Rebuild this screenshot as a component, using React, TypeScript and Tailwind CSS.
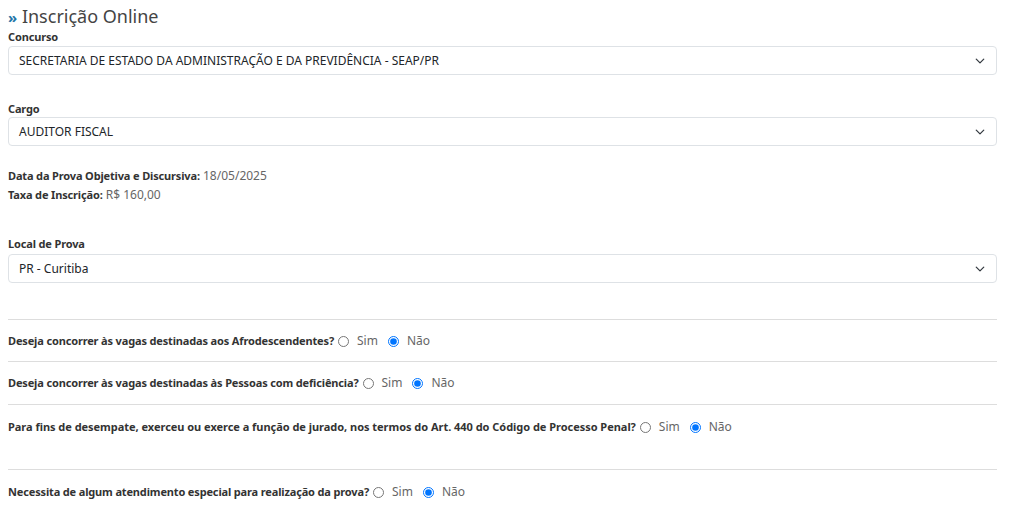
import React from "react";

const font = { fontFamily: '"Noto Sans", "Open Sans", Arial, sans-serif' };

function Chevron() {
  return (
    <svg width="10" height="10" viewBox="0 0 16 16" className="shrink-0">
      <path d="M2 5l6 6 6-6" fill="none" stroke="#343a40" strokeWidth="2" strokeLinecap="round" strokeLinejoin="round" />
    </svg>
  );
}

function Select({ value }: { value: string }) {
  return (
    <div className="flex h-[29px] items-center justify-between rounded border border-[#dee2e6] bg-white pl-[10px] pr-[11px] text-[12px] text-[#212529]">
      <span>{value}</span>
      <Chevron />
    </div>
  );
}

function Radio({ checked }: { checked?: boolean }) {
  return <input type="radio" readOnly checked={!!checked} className="m-0 h-[11px] w-[11px]" />;
}

function Question({ text, wide }: { text: string; wide?: boolean }) {
  return (
    <div className="flex items-center text-[12px] leading-[18px]">
      <span className={wide ? "text-[11px] font-bold tracking-[-0.03px] text-[#333]" : "text-[11px] font-bold tracking-[-0.15px] text-[#333]"}>{text}</span>
      <span className="ml-[4px] flex items-center text-[#666]">
        <Radio />
        <span className="ml-[8px]">Sim</span>
        <span className="ml-[10px] flex"><Radio checked /></span>
        <span className="ml-[8px]">Não</span>
      </span>
    </div>
  );
}

export default function App() {
  return (
    <div className="min-h-[519px] bg-white pl-[8px] pr-[27px] text-[#333]" style={font}>
      <h1 className="pt-[3px] text-[18px] leading-[26px] text-[#444]">
        <span className="text-[#1f76a8] text-[15px] font-bold">»</span> Inscrição Online
      </h1>

      <label className="block text-[11px] font-bold leading-[14px] tracking-[-0.15px]">Concurso</label>
      <div className="mt-[2px]">
        <Select value="SECRETARIA DE ESTADO DA ADMINISTRAÇÃO E DA PREVIDÊNCIA - SEAP/PR" />
      </div>

      <label className="mt-[27px] block text-[11px] font-bold leading-[14px] tracking-[-0.15px]">Cargo</label>
      <div className="mt-[1px]">
        <Select value="AUDITOR FISCAL" />
      </div>

      <div className="mt-[22px] space-y-[3px] text-[12px] leading-[16px]">
        <p><b className="text-[11px] tracking-[-0.15px]">Data da Prova Objetiva e Discursiva:</b> <span className="text-[#666]">18/05/2025</span></p>
        <p><b className="text-[11px] tracking-[-0.15px]">Taxa de Inscrição:</b> <span className="text-[#666]">R$ 160,00</span></p>
      </div>

      <label className="mt-[34px] block text-[11px] font-bold leading-[14px] tracking-[-0.15px]">Local de Prova</label>
      <div className="mt-[3px]">
        <Select value="PR - Curitiba" />
      </div>

      <hr className="mt-[36px] border-[#ddd]" />
      <div className="pt-[12px] pb-[11px]"><Question text="Deseja concorrer às vagas destinadas aos Afrodescendentes?" /></div>
      <hr className="border-[#ddd]" />
      <div className="pt-[12px] pb-[12px]"><Question text="Deseja concorrer às vagas destinadas às Pessoas com deficiência?" /></div>
      <hr className="border-[#ddd]" />
      <div className="pt-[13px] pb-[33px]"><Question wide text="Para fins de desempate, exerceu ou exerce a função de jurado, nos termos do Art. 440 do Código de Processo Penal?" /></div>
      <hr className="border-[#ddd]" />
      <div className="pt-[13px] pb-[11px]"><Question text="Necessita de algum atendimento especial para realização da prova?" /></div>
    </div>
  );
}
